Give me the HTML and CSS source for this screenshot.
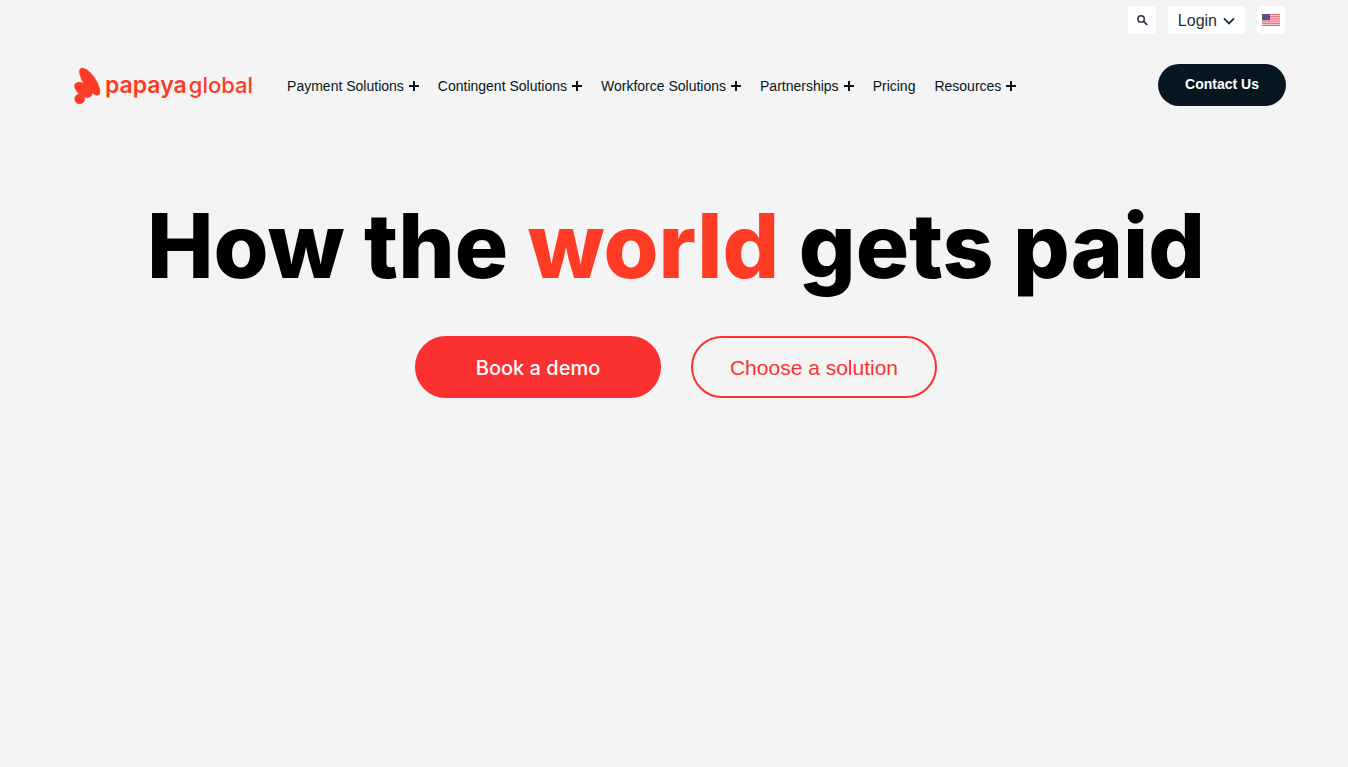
FILE: index.html
```
<!DOCTYPE html>
<html lang="en">
<head>
<meta charset="utf-8">
<meta name="viewport" content="width=device-width, initial-scale=1">
<title>Papaya Global</title>
<link rel="stylesheet" href="styles.css">
</head>
<body>
<header class="header">
  <div class="utility">
    <button class="chip" type="button" aria-label="Search">
      <svg width="12" height="12" viewBox="0 0 12 12" fill="none" stroke="currentColor"><circle cx="5.1" cy="4.9" r="3.2" stroke-width="1.4"/><path d="M7.3 7.1 11.3 11" stroke-width="1.6"/></svg>
    </button>
    <button class="chip chip-login" type="button">Login
      <svg width="12" height="8" viewBox="0 0 12 8" fill="none" stroke="currentColor" stroke-width="1.8"><path d="M1 1.4 6 6.4 11 1.4"/></svg>
    </button>
    <button class="chip" type="button" aria-label="United States">
      <svg width="18" height="12" viewBox="0 0 18 12"><path fill="#f8dfe2" d="M0 0h18v12H0z"/><path stroke="#e2667a" stroke-width="1" d="M0 .5h18M0 2.3h18M0 4.2h18M0 6h18M0 7.9h18M0 9.7h18M0 11.5h18"/><path fill="#46467f" d="M0 0h8v6H0z"/><path stroke="#aaaaca" stroke-width=".8" stroke-dasharray=".8 1.2" d="M.6 1.2h7M1.4 3h6M.6 4.8h7"/></svg>
    </button>
  </div>
  <div class="main-bar">
    <a class="logo" href="#">
      <svg class="logo-mark" width="28" height="38" viewBox="0 0 28 38" fill="currentColor"><ellipse cx="15.7" cy="14.6" rx="6.3" ry="16.2" transform="rotate(-34 15.7 14.6)"/><ellipse cx="9.3" cy="22.8" rx="6.1" ry="10.3" transform="rotate(-53 9.3 22.8)"/><circle cx="5.7" cy="31.9" r="5.2"/></svg>
      <span class="logo-text"><b class="logo-strong">papaya</b><span>global</span></span>
    </a>
    <nav class="nav">
      <a class="nav-link has-menu" href="#">Payment Solutions</a>
      <a class="nav-link has-menu" href="#">Contingent Solutions</a>
      <a class="nav-link has-menu" href="#">Workforce Solutions</a>
      <a class="nav-link has-menu" href="#">Partnerships</a>
      <a class="nav-link" href="#">Pricing</a>
      <a class="nav-link has-menu" href="#">Resources</a>
    </nav>
    <a class="contact" href="#">Contact Us</a>
  </div>
</header>
<main class="hero">
  <h1 class="title">How the <span class="accent">world</span> gets paid</h1>
  <div class="actions">
    <a class="cta cta-solid" href="#">Book a demo</a>
    <a class="cta cta-outline" href="#">Choose a solution</a>
  </div>
</main>
</body>
</html>
```
FILE: styles.css
```
* { box-sizing: border-box; }
body {
  margin: 0;
  background: #f4f4f4;
  color: #071722;
  font-family: "Liberation Sans", Arial, sans-serif;
}
a { color: inherit; text-decoration: none; }
svg { display: block; flex: none; }
.header { padding: 6px 62px 0 74px; }
.utility { display: flex; justify-content: flex-end; gap: 12px; padding-right: 1px; }
.chip {
  display: flex;
  align-items: center;
  justify-content: center;
  min-width: 28px;
  height: 28px;
  padding: 0;
  border: 0;
  border-radius: 4px;
  background: #fff;
  color: #1e2b3a;
  font: 16px/20px "Liberation Sans", Arial, sans-serif;
}
.chip-login { gap: 6px; padding: 2px 10px 0; }
.main-bar { display: flex; align-items: center; margin-top: 30px; }
.logo { display: flex; align-items: center; gap: 3px; color: #ff3b26; }
.logo-mark { margin-top: 2px; }
.logo-text {
  display: flex;
  align-items: baseline;
  gap: 2px;
  font: 500 22px/28px Inter, sans-serif;
}
.logo-strong { font-size: 23px; font-weight: 600; }
.nav { display: flex; gap: 19px; margin-left: 34px; padding-top: 2px; white-space: nowrap; }
.nav-link { display: flex; align-items: center; gap: 5px; font-size: 14px; line-height: 20px; }
.nav .has-menu::after {
  content: "";
  width: 10px;
  height: 10px;
  background:
    linear-gradient(currentColor, currentColor) center / 10px 2px no-repeat,
    linear-gradient(currentColor, currentColor) center / 2px 10px no-repeat;
}
.contact {
  margin-left: auto;
  padding: 10px 27px 12px;
  border-radius: 24px;
  background: #071722;
  color: #fff;
  font-size: 14px;
  font-weight: 700;
  line-height: 20px;
  white-space: nowrap;
}
.hero { padding: 92px 16px 0 20px; text-align: center; }
.title {
  margin: 0;
  color: #000;
  font: 800 89px/96px Inter, sans-serif;
}
.accent { color: #ff3b26; }
.actions { display: flex; flex-wrap: wrap; justify-content: center; gap: 30px; margin-top: 42px; }
.cta {
  width: 246px;
  padding: 17px 0 15px;
  border: 2px solid #fb3131;
  border-radius: 31px;
  font-size: 21px;
  line-height: 26px;
}
.cta-solid { background: #fb3131; color: #fff; font-family: Inter, sans-serif; font-size: 20px; font-weight: 500; }
.cta-outline { color: #fb3131; }
```
